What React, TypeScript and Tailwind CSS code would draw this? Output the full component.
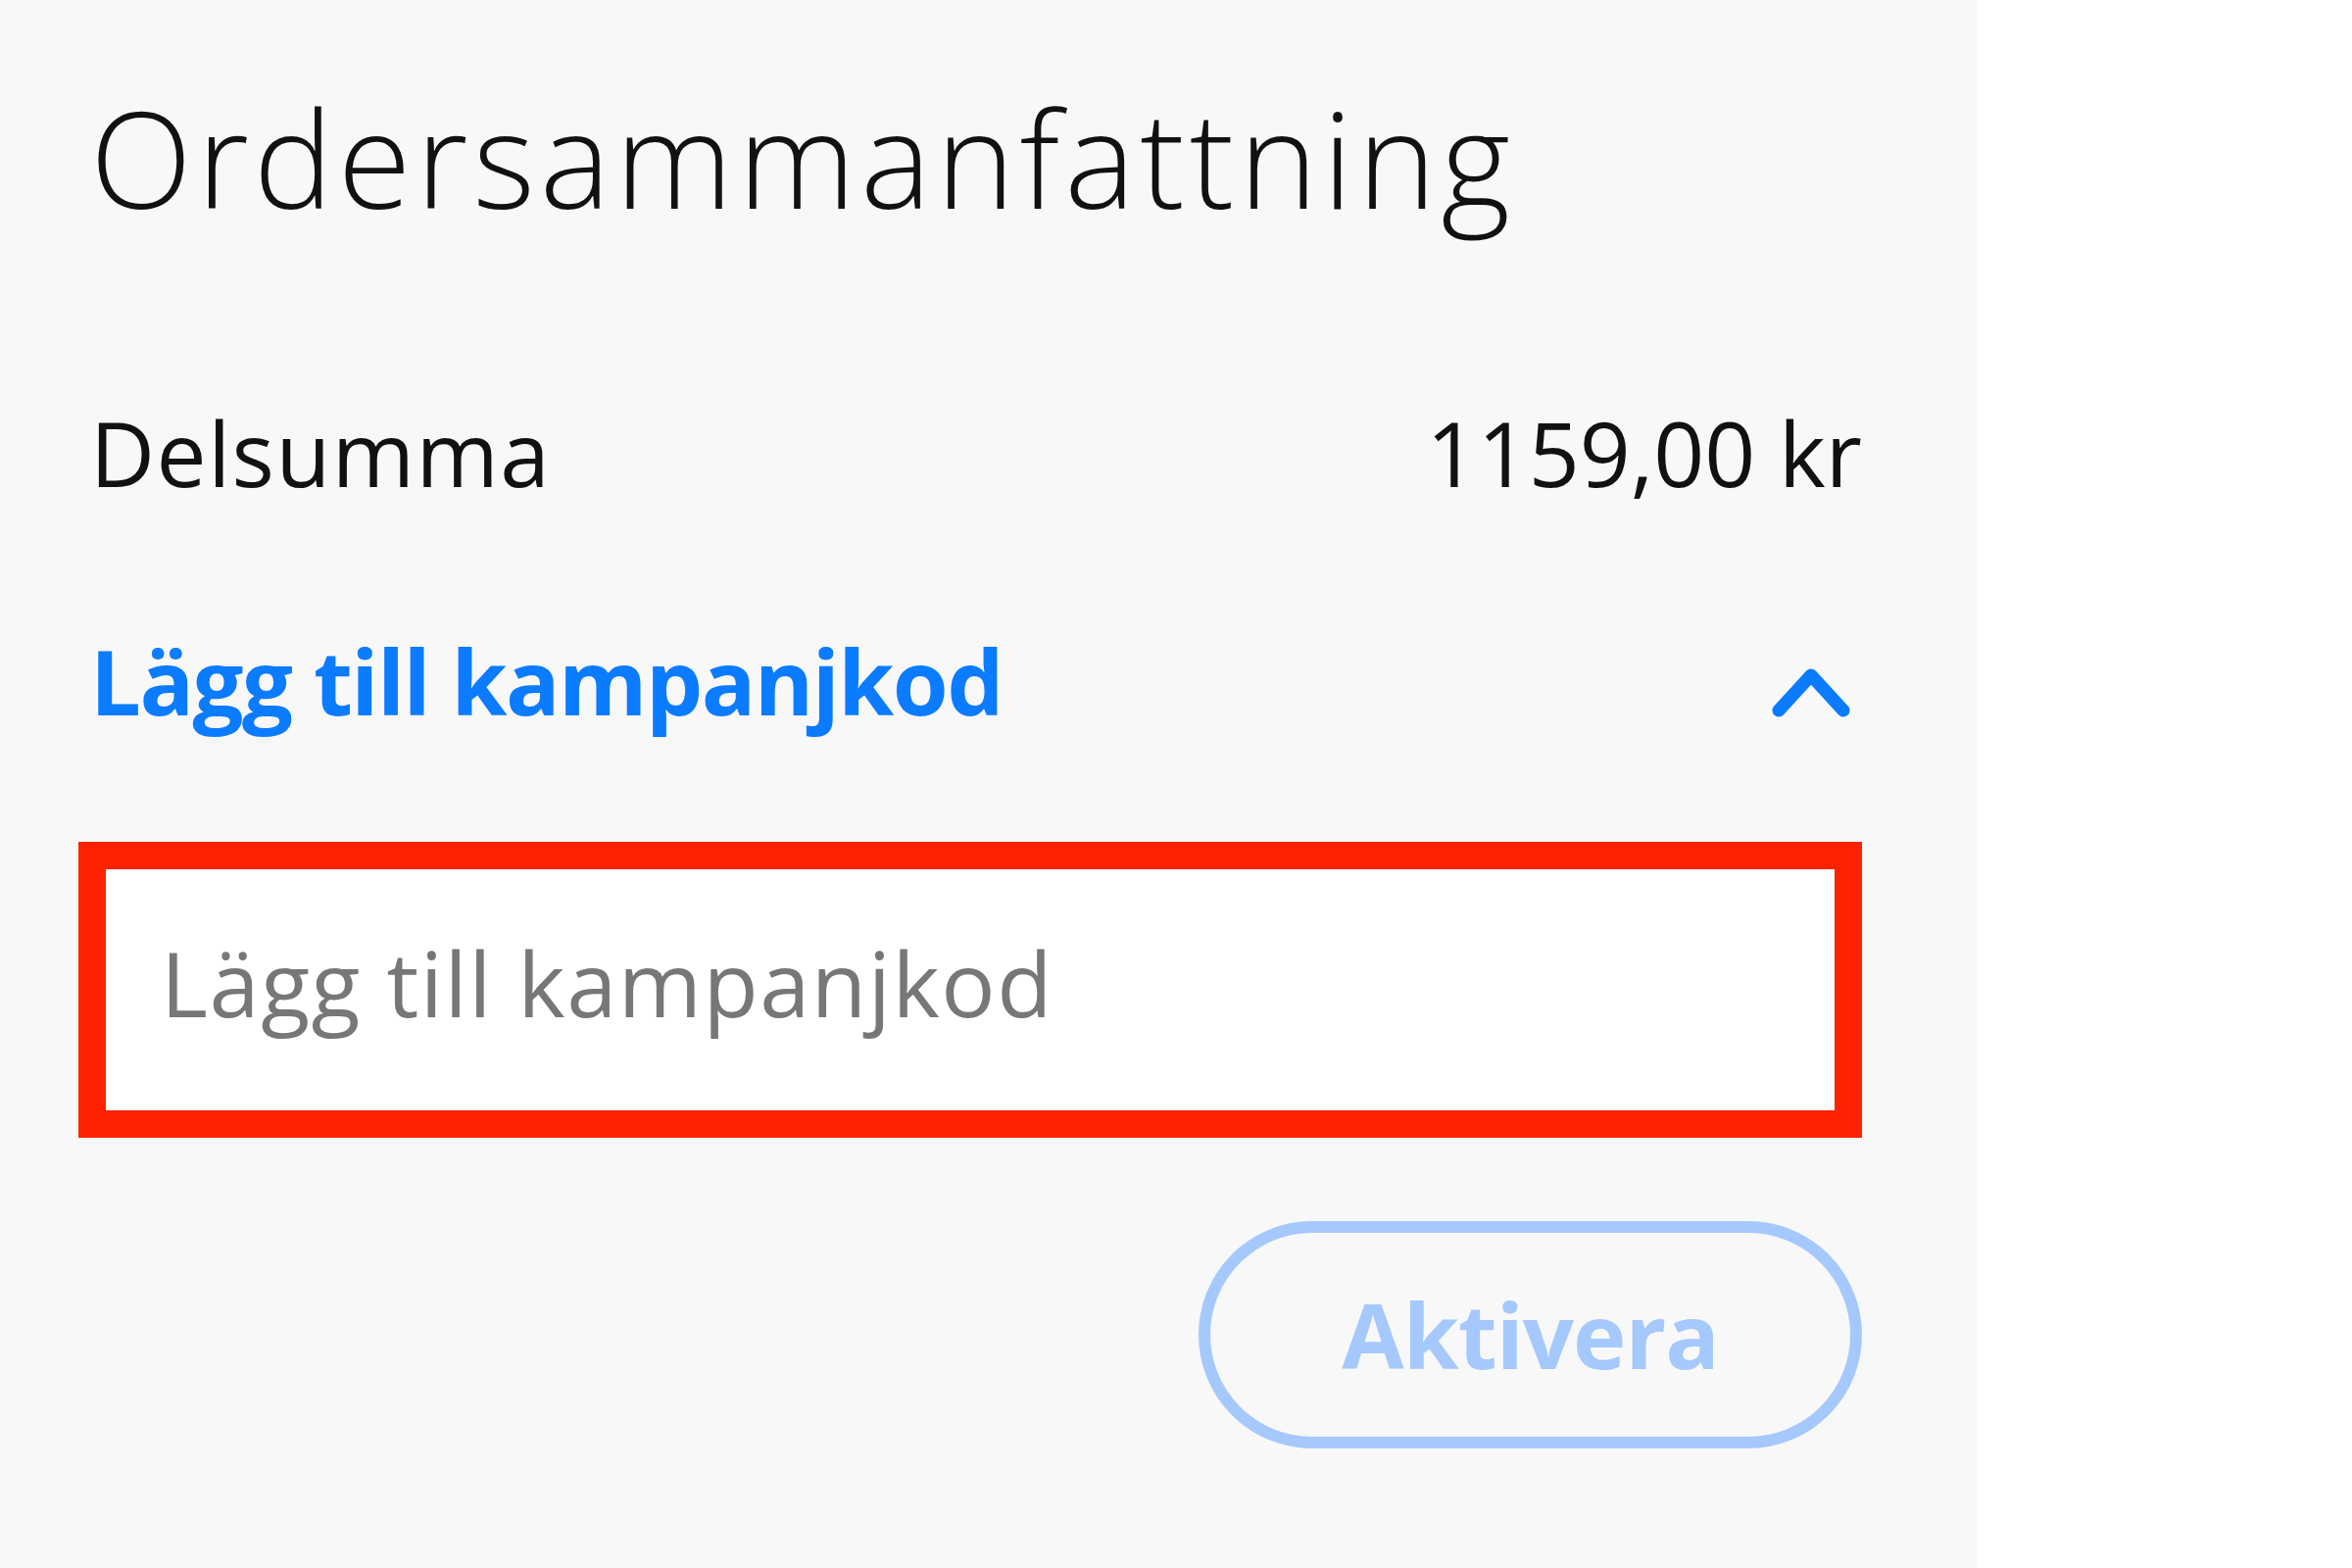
import React from 'react';

const font = { fontFamily: '"Open Sans", "Noto Sans", Arial, sans-serif' };

function ChevronUp() {
  return (
    <svg width="80" height="64" viewBox="0 0 80 64" className="mt-[26px] mr-[12px] shrink-0">
      <path
        d="M7 50 L40 14 L73 50"
        fill="none"
        stroke="#0b7bff"
        strokeWidth="13"
        strokeLinecap="round"
        strokeLinejoin="round"
      />
    </svg>
  );
}

export default function App() {
  return (
    <div className="flex w-[2400px] h-[1600px] bg-white" style={font}>
      <div className="w-[2017px] h-full bg-[#f8f8f8] pl-[92px] pr-[117px] pt-[93px]">
        <h1 className="text-[136px] leading-none font-light text-[#111111] tracking-[5px]">
          Ordersammanfattning
        </h1>

        <div className="mt-[188px] flex items-start justify-between text-[91px] leading-none text-[#111111]">
          <span className="tracking-[1.5px]">Delsumma</span>
          <span>1159,00 kr</span>
        </div>

        <div className="mt-[141px] flex items-start justify-between">
          <span className="text-[92px] leading-none font-bold text-[#0b7bff] tracking-[-1.5px]">
            Lägg till kampanjkod
          </span>
          <ChevronUp />
        </div>

        <div className="mt-[118px] -ml-[12px] h-[302px] border-[28px] border-[#ff2200] bg-white pl-[56px] pt-[70px]">
          <span className="text-[92px] leading-none text-[#777777] tracking-[1.5px]">
            Lägg till kampanjkod
          </span>
        </div>

        <div className="mt-[85px] flex justify-end">
          <button className="w-[677px] h-[232px] rounded-full border-[12px] border-[#a5c8fd] flex items-center justify-center text-[92px] leading-none font-bold text-[#a5c8fd] tracking-[-1px]">
            Aktivera
          </button>
        </div>
      </div>
    </div>
  );
}
